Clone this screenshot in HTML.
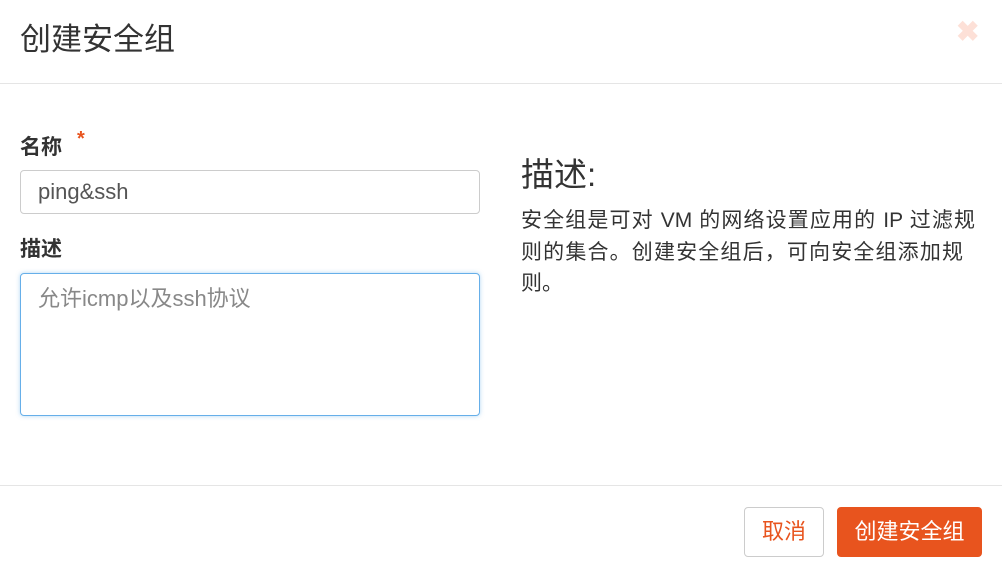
<!DOCTYPE html>
<html><head><meta charset="utf-8"><style>
*{margin:0;padding:0;box-sizing:border-box}
body{width:1002px;height:577px;background:#fff;font-family:"Liberation Sans","Noto Sans CJK SC",sans-serif;position:relative;overflow:hidden;color:#333}
.a{position:absolute}
.j{text-align:justify;text-align-last:justify;width:454px;white-space:nowrap}
</style></head><body>
<div class="a" style="left:20px;top:19px;font-size:31px;line-height:42px;color:#333">创建安全组</div>
<div class="a" style="left:956px;top:17px;font-size:28px;line-height:30px;color:#fde0d7;font-weight:bold">✖</div>
<div class="a" style="left:0;top:83px;width:1002px;height:1px;background:#e5e5e5"></div>
<div class="a" style="left:20px;top:134px;font-size:21px;line-height:28px;font-weight:bold">名称</div>
<div class="a" style="left:77px;top:128px;font-size:20px;color:#e8541e;font-weight:bold">*</div>
<div class="a" style="left:20px;top:170px;width:460px;height:44px;border:1px solid #ccc;border-radius:4px;font-size:22px;line-height:42px;padding-left:17px;color:#555">ping&amp;ssh</div>
<div class="a" style="left:20px;top:236px;font-size:21px;line-height:28px;font-weight:bold">描述</div>
<div class="a" style="left:20px;top:273px;width:460px;height:143px;border:1px solid #66afe9;border-radius:4px;box-shadow:0 0 4px rgba(102,175,233,.5);font-size:22px;line-height:28px;padding:11px 17px;color:#888">允许icmp以及ssh协议</div>
<div class="a" style="left:521px;top:154px;font-size:33px;line-height:42px">描述:</div>
<div class="a" style="left:521px;top:205px;font-size:21px;line-height:31.5px;color:#333">
<div class="j">安全组是可对 VM 的网络设置应用的 IP 过滤规</div>
<div class="j" style="width:442px">则的集合。创建安全组后，可向安全组添加规</div>
<div>则。</div>
</div>
<div class="a" style="left:0;top:485px;width:1002px;height:1px;background:#e5e5e5"></div>
<div class="a" style="left:744px;top:507px;width:80px;height:50px;border:1px solid #ccc;border-radius:4px;color:#e8541e;font-size:22px;line-height:48px;text-align:center">取消</div>
<div class="a" style="left:837px;top:507px;width:145px;height:50px;background:#e8541e;border-radius:4px;color:#fff;font-size:22px;line-height:50px;text-align:center">创建安全组</div>
</body></html>
